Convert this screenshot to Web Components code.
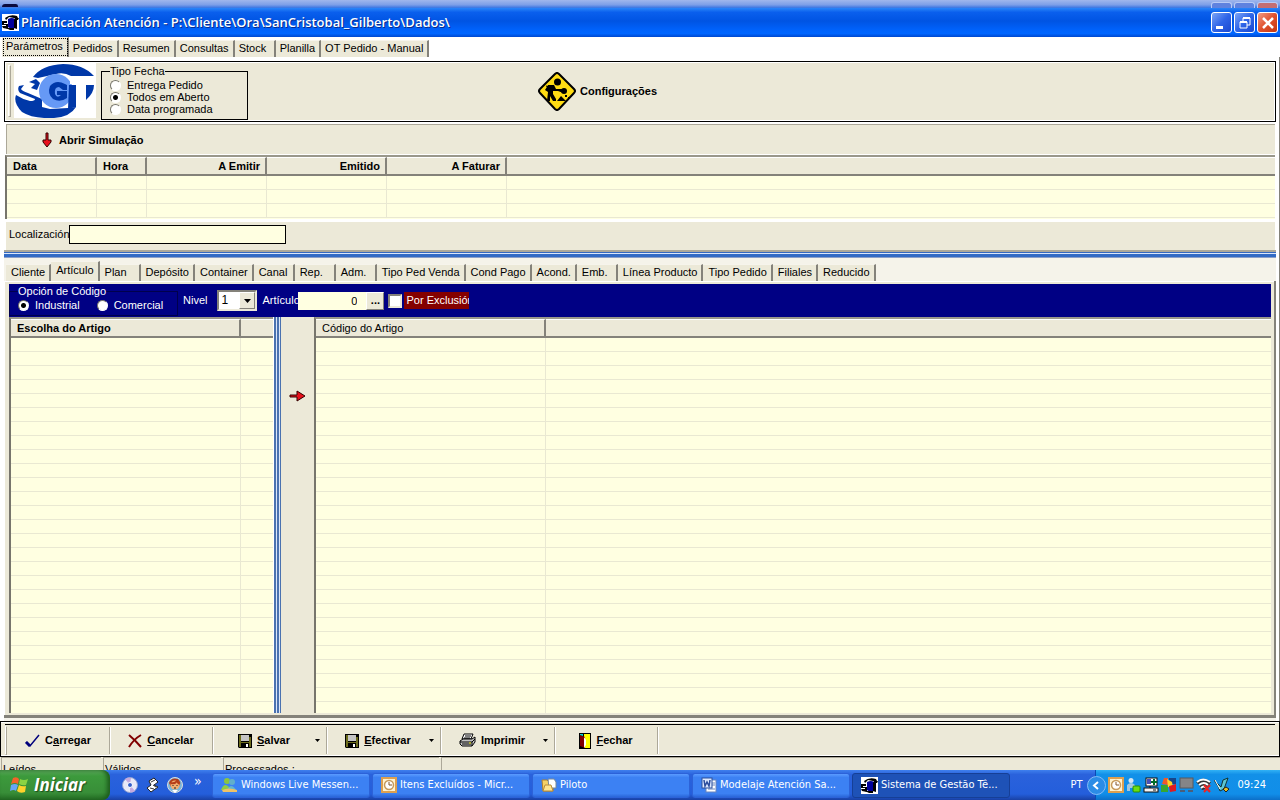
<!DOCTYPE html>
<html lang="es">
<head>
<meta charset="utf-8">
<title>Planificación Atención</title>
<style>
  html, body { margin: 0; height: 100%; }
  body {
    font: 11px/13px "Liberation Sans", Arial, sans-serif;
    color: #000;
    background: #fff;
    overflow: hidden;
  }
</style>
</head>
<body>
<planning-desktop></planning-desktop>

<script>
const ICONS = {
  sgt: [17, 17, `
    <rect width="17" height="17" fill="#fff"/>
    <path d="M3 4Q8 0 15 2L16 4H12L7 3 4 6Z"/>
    <path d="M6 5Q10 3 13 5V14Q9 16 6 13Z" fill="#00009a"/>
    <path d="M0 7H5V9H2V10H6V15L1 14 0 12H4V11H0ZM13 4H17L16 6H15V15L12 14V6Z"/>
    <path d="M4 14L8 16H12V14H6Z"/>`],
  logo: [82, 55, `
    <rect width="82" height="55" fill="#fff"/>
    <path d="M19 14Q28 2 49 1Q69 1 80 13H57Q50 9 42 11L24 15Z" fill="#0038a8"/>
    <path d="M5 23L10 22 7 26Q8 28 14 30L28 36V44L36 46 54 45 62 44Q56 54 40 55Q19 56 8 49Q-1 40 2 32Q8 36 16 38Q21 38 21 36L6 30Q3 27 5 23Z" fill="#0038a8"/>
    <path d="M15 19L22 16 26 20 23 27 17 25 21 21Z" fill="#0038a8"/>
    <circle cx="42" cy="28" r="17" fill="#6699f5"/>
    <path d="M51 21Q42 16 36 23Q33 31 39 36Q46 40 53 35V28H43V32H47Q43 36 41 31Q40 24 45 24L49 27H53V22Z" fill="#0038a8"/>
    <path d="M55 22H62V44L54 46Z" fill="#0038a8"/>
    <path d="M56 14H82V21H56Z" fill="#fff"/>
    <path d="M72 22H80Q80 30 72 37Z" fill="#0038a8"/>`],
  works: [38, 39, `
    <path d="M17 2Q19 0 21 2L36 17Q38 19 36 21L21 37Q19 39 17 37L2 21Q0 19 2 17Z" fill="#ffdc13" stroke="#000" stroke-width="2"/>
    <circle cx="19.500" cy="10" r="3.500"/>
    <circle cx="26" cy="19" r="3"/>
    <path d="M10 13L16 13 18 17H24V19H15V22L18 27V29H15L12 24 12 29H9L10 20 7 18Z"/>
    <path d="M8 14L24 20" stroke="#000"/>
    <path d="M19 29L23 24 28 29ZM27 23H29V25H27ZM30 25H31V27H30Z"/>`],
  down: [10, 17, `<path d="M4 1H6V8H9V10L5 15 1 10V8H4Z" fill="#e8101c" stroke="#300"/>`],
  right: [17, 12, `<path d="M1 5H8V1L16 6 8 11V7H1Z" fill="#e8101c" stroke="#300"/>`],
  check: [15, 14, `<path d="M1 8L5 12 14 1" fill="none" stroke="#00007c" stroke-width="1.500"/><path d="M1 8L5 12" stroke="#00007c" stroke-width="3"/>`],
  cross: [14, 14, `<path d="M1 1Q7 6 13 13M13 1Q6 5 1 13" fill="none" stroke="#800000" stroke-width="2"/>`],
  disk: [14, 14, `
    <path d="M0 0H14V14H1L0 13Z" fill="#000"/>
    <path d="M1 1H3V8H11V3H13V13H11V9H3V13H1Z" fill="#6c6c1c"/>
    <path d="M3 1H11V7H3Z" fill="#c4c4c4"/><path d="M8 10H10V13H8Z" fill="#fff"/>`],
  printer: [17, 15, `
    <path d="M5 1H14L12 6H3Z" fill="#fff" stroke="#000"/>
    <path d="M1 8L4 6H13L16 4V9L13 13H3L1 11Z" fill="#c4c4c4" stroke="#000"/>
    <path d="M6 3H12M5 5H11M1 9H13L16 6M3 11H12M13 9V13" stroke="#000" fill="none"/>
    <path d="M10 10H12" stroke="#ee0"/>`],
  door: [12, 16, `
    <rect width="12" height="16"/><rect x="5" y="1" width="6" height="14" fill="#ff0"/>
    <path d="M1 2L6 4V15L1 13Z" fill="#800000"/><path d="M1 1H4V3L1 2Z" fill="#09d5d5"/>
    <path d="M5 4L7 7V12L5 15" fill="#fff"/>`],
  caret: [7, 4, `<path d="M0 0H7L3.500 4Z"/>`],
  drop: [5, 3, `<path d="M0 0H5L2.500 3Z"/>`],
  winflag: [19, 18, `
    <path d="M3 2Q7 0 9 3L8 8Q5 6 1 8Z" fill="#f3632a"/>
    <path d="M10 3Q14 5 18 3L16 9Q13 10 9 8Z" fill="#8bd343"/>
    <path d="M1 9Q5 7 8 9L6 15Q4 13 0 15Z" fill="#66a5f7"/>
    <path d="M9 9Q12 11 16 10L15 16Q10 18 7 15Z" fill="#ffd22b"/>`],
  cd: [16, 16, `
    <circle cx="8" cy="8" r="7.500" fill="#e9e9f7" stroke="#8fa0d2"/>
    <path d="M8 8L3 2Q6 0 9 1ZM8 8L13 14Q11 16 8 15Z" fill="#c4a9df"/>
    <circle cx="8" cy="8" r="2.500" fill="#355fca" stroke="#fff"/>`],
  desk: [15, 16, `
    <path d="M4 4L9 1 13 5 9 8 13 10 6 15 2 11 6 8Z" fill="#fff" stroke="#222"/>
    <path d="M6 5L10 3M5 11L9 12M8 8L11 10" stroke="#333"/>`],
  face: [16, 16, `
    <circle cx="8" cy="8" r="7.500" fill="#79b5db" stroke="#ddd"/>
    <path d="M2 6Q4 0 11 2Q15 6 12 9L4 10Z" fill="#b53c18"/>
    <circle cx="8" cy="8" r="4.500" fill="#f3ad70"/><path d="M4 6Q8 7 10 4L12 7" stroke="#b53c18" stroke-width="2" fill="none"/>
    <path d="M6 8V9M10 8V9M7 11H9" stroke="#222"/><path d="M5 13H11L8 16Z" fill="#fff"/>`],
  people: [17, 16, `
    <circle cx="6" cy="4" r="3" fill="#8ac540"/><circle cx="11" cy="5" r="3" fill="#61aecb"/>
    <path d="M0 13Q3 5 8 10L9 13Z" fill="#8fcc46"/><path d="M6 13Q10 5 15 13Z" fill="#64b5cf"/>
    <path d="M1 13Q8 10 16 13V15H2Z" fill="#efc267"/>`],
  clock: [16, 16, `
    <rect x="1" y="1" width="14" height="14" fill="#fff2ce" stroke="#dda050" stroke-width="2"/>
    <circle cx="8" cy="8" r="4.500" fill="#fff" stroke="#c79a5c" stroke-width="1.500"/><path d="M8 5V8H11" fill="none" stroke="#84572b"/>`],
  folder: [16, 14, `
    <path d="M1 2H6L8 4H12V13H2Z" fill="#f5d166" stroke="#b2812c"/>
    <path d="M7 1H13L15 4V10H8Z" fill="#fff" stroke="#789"/>
    <path d="M4 7H10L12 13H2Z" fill="#ffe590" stroke="#b98d3b"/>`],
  word: [16, 16, `
    <rect x="5" y="3" width="10" height="12" fill="#fff" stroke="#6885bd"/>
    <path d="M11 6H14M11 8H14M7 12H14" stroke="#6885bd"/>
    <rect x="1" y="1" width="10" height="10" fill="#dce8ff" stroke="#2c519b"/>
    <path d="M3 3L4 9 6 5 8 9 9 3" fill="none" stroke="#2b4c9c" stroke-width="1.500"/>`],
  back: [19, 19, `
    <circle cx="9.500" cy="9.500" r="9" fill="#2b8ce6" stroke="#83bdf7"/>
    <path d="M11 6L7 9.500 11 13" fill="none" stroke="#fff" stroke-width="2"/>`],
  msn: [15, 16, `
    <circle cx="5" cy="3.500" r="2.500" fill="#d6e5f1"/><path d="M1 14V8Q5 4 9 8V14H7V11H4V14Z" fill="#a5c8dc"/>
    <rect x="7" y="9" width="7" height="6" rx="1" fill="#6bdd12" stroke="#279000"/>`],
  network: [16, 16, `
    <rect x="3" y="1" width="11" height="8" fill="#fff" stroke="#111"/><rect x="4" y="2" width="4" height="5" fill="#4a51b5"/>
    <path d="M11 2V8M8 5H14" stroke="#006d28" stroke-width="2"/>
    <rect x="1" y="11" width="14" height="4" fill="#f3f3f3" stroke="#111"/><path d="M7 9V11M10 13H13" stroke="#111"/>`],
  blocks: [16, 16, `
    <path d="M1 7L3 1H7V8Z" fill="#ef5a29"/><path d="M8 1H15V7H8Z" fill="#16468b"/>
    <path d="M0 8H7V15H0Z" fill="#36a631"/><path d="M6 2L11 5 12 10H7Z" fill="#ffd327"/><path d="M8 9L15 7V14L9 15Z" fill="#dc1b21"/>`],
  pcs: [15, 16, `
    <rect x="1" y="1" width="13" height="10" fill="#858587" stroke="#58595c"/>
    <path d="M1 14H6M9 14H14" stroke="#4a5e7b" stroke-width="2"/>`],
  wifi: [16, 16, `
    <path d="M0 5Q7-2 15 5L13 8 10 12 6 13 3 8Z" fill="#333"/>
    <path d="M1 5Q7 0 14 5M3 8Q8 4 12 8M5 11Q8 8 10 11" fill="none" stroke="#fff" stroke-width="2"/>
    <path d="M8 8L14 15M14 8L8 15" stroke="#e22" stroke-width="2"/>`],
  wave: [16, 16, `
    <path d="M0 3L4 9 6 14 10 12 14 1 9 3 7 10 3 6Z" fill="#5cc6d0" stroke="#133"/>
    <path d="M1 3L6 12" stroke="#fff"/><path d="M9 12L12 10 15 12 12 15Z" fill="#e6bd20" stroke="#222"/>`],
  minimize: [21, 21, `<path d="M4 14.500H11" stroke="#fff" stroke-width="3"/>`],
  restore: [21, 21, `<path d="M8 8V5H15V12H12M5 9H12V15H5Z" fill="none" stroke="#fff"/><path d="M8 5H15M5 9H12" stroke="#fff" stroke-width="2"/>`],
  close: [21, 21, `<path d="M5 5L15 15M15 5L5 15" stroke="#fff" stroke-width="2.500"/>`],
};

class AppIcon extends HTMLElement {
  constructor() {
    super();
    this.attachShadow({ mode: "open" });
  }

  connectedCallback() {
    const [w, h, body] = ICONS[this.getAttribute("name")];
    this.shadowRoot.innerHTML = `
      <style>
        :host { display: inline-block; flex: none; }
        svg { display: block; }
      </style>
      <svg width="${w}" height="${h}" viewBox="0 0 ${w} ${h}" aria-hidden="true">${body}</svg>
    `;
  }
}

class TitleBar extends HTMLElement {
  constructor() {
    super();
    this.attachShadow({ mode: "open" });
    this.shadowRoot.innerHTML = `
      <style>
        :host { display: block; }
        .behind {
          height: 8px;
          display: flex;
          justify-content: flex-end;
          gap: 2px;
          padding-right: 2px;
          box-sizing: border-box;
          background: linear-gradient(#a0b7ec, #7d9fe8 60%, #3773e2);
        }
        .behind i {
          width: 19px;
          height: 5px;
          margin-top: 2px;
          border: 1px solid #b9cbf5;
          border-bottom: 0;
          border-radius: 3px 3px 0 0;
          background: #5f82df;
        }
        .behind i:last-child { background: #c46e73; }
        .behind b {
          width: 16px;
          height: 3px;
          margin: 4px auto 0 2px;
          border-radius: 8px 6px 0 0;
          background: #0b0b3c;
        }
        header {
          display: flex;
          align-items: center;
          height: 29px;
          padding: 0 2px;
          background: linear-gradient(#2a85f8, #0a5fed 15%, #0054e3 45%, #0062fb 75%, #0066ff 88%, #0048cf);
        }
        h1 {
          flex: 1;
          margin: 0 0 0 2px;
          font: 600 13px/17px "Open Sans", sans-serif;
          color: #fff;
          text-shadow: 1px 1px #0a2c8c;
        }
        .buttons { display: flex; gap: 2px; }
        button {
          width: 21px;
          height: 21px;
          padding: 0;
          border: 1px solid #fff;
          border-radius: 3px;
          display: grid;
          place-items: center;
          background: linear-gradient(135deg, #7ba4f6, #2f65e8 50%, #1b48d0);
        }
        button.close { background: linear-gradient(135deg, #f09c85, #e0512e 50%, #c33712); }
      </style>
      <div class="behind"><b></b><i></i><i></i><i></i></div>
      <header>
        <app-icon name="sgt"></app-icon>
        <h1><slot></slot></h1>
        <div class="buttons">
          <button aria-label="Minimizar"><app-icon name="minimize"></app-icon></button>
          <button aria-label="Restaurar"><app-icon name="restore"></app-icon></button>
          <button class="close" aria-label="Fechar"><app-icon name="close"></app-icon></button>
        </div>
      </header>
    `;
  }
}

class TabStrip extends HTMLElement {
  constructor() {
    super();
    this.attachShadow({ mode: "open" });
  }

  connectedCallback() {
    this.selected = Number(this.getAttribute("selected") || 0);
    this.render();
  }

  render() {
    const tabs = this.getAttribute("tabs").split("|");
    this.shadowRoot.innerHTML = `
      <style>
        :host {
          display: flex;
          flex: none;
          align-items: flex-end;
          height: 20px;
          padding-left: 2px;
        }
        button {
          height: 17px;
          min-width: 41px;
          padding: 0 4px 2px var(--tab-start, 5px);
          border: 0;
          border-top: 1px solid #f6f4ec;
          border-right: 2px solid #84827a;
          background: #ece9d8;
          color: #000;
          font: inherit;
          text-align: left;
          white-space: nowrap;
        }
        button[aria-selected="true"] { height: 20px; }
        :host([focused]) button[aria-selected="true"] {
          outline: 1px dotted #000;
          outline-offset: -2px;
        }
      </style>
      ${tabs
        .map((t, i) => `<button role="tab" aria-selected="${i === this.selected}">${t}</button>`)
        .join("")}
    `;
    this.setAttribute("role", "tablist");
    this.shadowRoot.querySelectorAll("button").forEach((btn, i) => {
      btn.onclick = () => {
        this.selected = i;
        this.render();
      };
    });
  }
}

class RadioOption extends HTMLElement {
  constructor() {
    super();
    this.attachShadow({ mode: "open" });
  }

  connectedCallback() {
    this.shadowRoot.innerHTML = `
      <style>
        :host { display: block; }
        label { display: flex; align-items: center; gap: 6px; height: 12px; white-space: nowrap; }
        input {
          appearance: none;
          width: 11px;
          height: 11px;
          margin: 0;
          border: 1px solid;
          border-color: #77756c #fff #fff #77756c;
          border-radius: 50%;
          background: #fff;
        }
        input:checked { background: radial-gradient(circle, #000 2px, #fff 3px); }
      </style>
      <label><input type="radio" ${this.hasAttribute("checked") ? "checked" : ""}><slot></slot></label>
    `;
  }
}

class DataGrid extends HTMLElement {
  constructor() {
    super();
    this.attachShadow({ mode: "open" });
  }

  // columns: "Title:width[:right]" joined with "|"; the last one takes the rest
  connectedCallback() {
    const columns = this.getAttribute("columns").split("|").map((c) => c.split(":"));
    const rows = Number(this.getAttribute("rows"));
    const row = `<tr>${columns.map(() => "<td></td>").join("")}</tr>`;
    this.shadowRoot.innerHTML = `
      <style>
        :host {
          display: block;
          overflow: hidden;
          border-top: 2px solid #9a988b;
          border-left: 2px solid #77756c;
          padding-bottom: 1px;
          background: #ffffe1;
        }
        table { width: 100%; table-layout: fixed; border-collapse: separate; border-spacing: 0; }
        th, td { box-sizing: border-box; padding: 0; }
        th {
          height: 19px;
          padding: 0 5px 0 6px;
          border-top: 1px solid #fff;
          border-right: 2px solid #84827a;
          border-bottom: 2px solid #84827a;
          background: #ece9d8;
          text-align: left;
          white-space: nowrap;
          font-weight: var(--head-weight, bold);
          line-height: 13px;
        }
        th.right { text-align: right; }
        th:last-child { border-right: 0; }
        td { height: 14px; border-right: 1px solid #e9e8d2; border-bottom: 1px solid #e9e8d2; }
        td:last-child { border-right: 0; }
      </style>
      <table>
        <thead>
          <tr>${columns
            .map(([title, width, align]) =>
              `<th class="${align || ""}" ${width ? `style="width: ${width}px"` : ""}>${title}</th>`)
            .join("")}</tr>
        </thead>
        <tbody>${row.repeat(rows)}</tbody>
      </table>
    `;
  }
}

class ToolButton extends HTMLElement {
  constructor() {
    super();
    this.attachShadow({ mode: "open" });
  }

  connectedCallback() {
    this.shadowRoot.innerHTML = `
      <style>
        :host {
          display: flex;
          border-right: 1px solid #aca899;
          box-shadow: 1px 0 #fff;
        }
        button {
          display: flex;
          align-items: center;
          justify-content: center;
          gap: 5px;
          width: 102px;
          padding: 0;
          border: 0;
          background: none;
          font: inherit;
          font-weight: bold;
          color: #000;
        }
        :host([menu]) button { width: 96px; padding-left: 6px; }
        :host([menu]) button.menu { width: 17px; padding: 0; }
      </style>
      <button><app-icon name="${this.getAttribute("icon")}"></app-icon><span><slot></slot></span></button>
      ${this.hasAttribute("menu") ? `<button class="menu" aria-label="Opções"><app-icon name="drop"></app-icon></button>` : ""}
    `;
  }
}

class ArticleFilter extends HTMLElement {
  constructor() {
    super();
    this.attachShadow({ mode: "open" });
    this.shadowRoot.innerHTML = `
      <style>
        :host {
          display: flex;
          flex: none;
          align-items: center;
          height: 33px;
          background: #000084;
          color: #fff;
        }
        fieldset {
          width: 169px;
          height: 31px;
          box-sizing: border-box;
          margin: 0;
          padding: 0 0 0 8px;
          border: 1px solid #00004c;
          min-width: 0;
        }
        legend { padding: 0; height: 13px; }
        .options { display: flex; gap: 17px; padding-top: 1px; }
        .nivel { margin: 0 10px 0 5px; }
        .combo {
          display: grid;
          align-items: center;
          width: 36px;
          height: 17px;
          border: 2px solid;
          border-color: #84827a #ece9d8 #ece9d8 #84827a;
          background: #fff;
        }
        .combo > * { grid-area: 1 / 1; }
        select {
          appearance: none;
          width: 36px;
          height: 17px;
          padding: 0 2px;
          border: 0;
          background: none;
          font: inherit;
          font-size: 12px;
        }
        .arrow {
          justify-self: end;
          display: grid;
          place-items: center;
          width: 14px;
          height: 15px;
          border: 1px solid;
          border-color: #fff #84827a #84827a #fff;
          background: #ece9d8;
          pointer-events: none;
        }
        .articulo { width: 36px; margin-left: 5px; overflow: hidden; }
        input[type="text"] {
          width: 68px;
          height: 18px;
          box-sizing: border-box;
          padding: 0 9px;
          border: 0;
          background: #ffffe1;
          font: inherit;
          text-align: right;
        }
        button {
          width: 18px;
          height: 18px;
          padding: 0;
          border: 1px solid;
          border-color: #fff #84827a #84827a #fff;
          background: #ece9d8;
          font: bold 11px/13px "Liberation Sans", Arial, sans-serif;
        }
        .exclude { display: flex; align-items: center; gap: 2px; margin-left: 4px; }
        input[type="checkbox"] {
          appearance: none;
          width: 14px;
          height: 14px;
          margin: 0;
          border: 2px solid;
          border-color: #84827a #ece9d8 #ece9d8 #84827a;
          background: #fff;
        }
        .exclude span { width: 63px; padding: 2px 0 2px 2px; overflow: hidden; white-space: nowrap; background: #840000; }
      </style>
      <fieldset>
        <legend>Opción de Código</legend>
        <div class="options">
          <radio-option checked>Industrial</radio-option>
          <radio-option>Comercial</radio-option>
        </div>
      </fieldset>
      <label class="nivel" for="nivel">Nivel</label>
      <div class="combo">
        <select id="nivel"><option>1</option><option>2</option><option>3</option></select>
        <span class="arrow"><app-icon name="caret"></app-icon></span>
      </div>
      <label class="articulo" for="articulo">Artículo</label>
      <input type="text" id="articulo" value="0">
      <button aria-label="Buscar">...</button>
      <label class="exclude"><input type="checkbox"><span>Por Exclusión</span></label>
    `;
  }
}

class TaskButton extends HTMLElement {
  constructor() {
    super();
    this.attachShadow({ mode: "open" });
  }

  connectedCallback() {
    this.shadowRoot.innerHTML = `
      <style>
        :host { display: block; flex: 0 1 158px; min-width: 0; }
        button {
          display: flex;
          align-items: center;
          gap: 3px;
          width: 100%;
          height: 25px;
          padding: 0 8px;
          border: 1px solid #2c62d8;
          border-radius: 3px;
          background: linear-gradient(#5b9bff, #3c81f3 15%, #3c81f3 85%, #2a66d8);
          color: #fff;
          font: inherit;
          white-space: nowrap;
        }
        :host([active]) button { background: #1e52b7; border-color: #163f96; }
      </style>
      <button><app-icon name="${this.getAttribute("icon")}"></app-icon><span><slot></slot></span></button>
    `;
  }
}

class TaskBar extends HTMLElement {
  constructor() {
    super();
    this.attachShadow({ mode: "open" });
    this.shadowRoot.innerHTML = `
      <style>
        :host {
          display: flex;
          align-items: center;
          height: 30px;
          background: linear-gradient(#3f80ee, #2a62dc 15%, #245edb 80%, #1941a5);
          color: #fff;
          font: 11px/14px "DejaVu Sans Condensed", "DejaVu Sans", sans-serif;
        }
        .start {
          display: flex;
          align-items: center;
          gap: 5px;
          width: 110px;
          height: 30px;
          padding: 0 0 0 10px;
          border: 0;
          border-radius: 0 8px 8px 0;
          background: linear-gradient(#5faa5f, #3c9a3c 20%, #388e38 75%, #256d25);
          box-shadow: inset -3px 0 4px #1d5c1d;
          color: #fff;
          font: italic bold 17px/24px "Open Sans", sans-serif;
          text-shadow: 1px 1px 1px #1c4d1c;
        }
        .quick { display: flex; align-items: center; gap: 7px; width: 90px; padding-left: 12px; }
        .more { align-self: flex-start; line-height: 8px; font-size: 14px; margin-left: 4px; }
        .tasks { display: flex; flex: 1; gap: 2px; min-width: 0; }
        .lang { padding-right: 13px; }
        .tray {
          display: flex;
          align-items: center;
          gap: 2px;
          height: 30px;
          padding-right: 14px;
          border-left: 1px solid #0a4bb4;
          background: linear-gradient(#31b1f5, #1290e8 15%, #118ee9 80%, #0c6fc8);
        }
        .tray app-icon:first-child { margin-left: -9px; }
        time { margin-left: 5px; }
      </style>
      <button class="start"><app-icon name="winflag"></app-icon>Iniciar</button>
      <div class="quick">
        <app-icon name="cd"></app-icon>
        <app-icon name="desk"></app-icon>
        <app-icon name="face"></app-icon>
        <span class="more">»</span>
      </div>
      <div class="tasks"><slot></slot></div>
      <span class="lang">PT</span>
      <div class="tray">
        <app-icon name="back"></app-icon>
        <app-icon name="clock"></app-icon>
        <app-icon name="msn"></app-icon>
        <app-icon name="network"></app-icon>
        <app-icon name="blocks"></app-icon>
        <app-icon name="pcs"></app-icon>
        <app-icon name="wifi"></app-icon>
        <app-icon name="wave"></app-icon>
        <time>09:24</time>
      </div>
    `;
  }
}

class PlanningDesktop extends HTMLElement {
  constructor() {
    super();
    this.attachShadow({ mode: "open" });
    this.shadowRoot.innerHTML = `
      <style>
        :host { display: flex; flex-direction: column; height: 100vh; }
        main {
          flex: 1;
          min-height: 0;
          display: flex;
          flex-direction: column;
          padding: 4px 3px 0 4px;
          border-right: 1px solid #84827a;
        }
        .pages { --tab-start: 4px; }
        .grip { width: 1px; border: 1px solid; border-color: #fff #aca899 #aca899 #fff; }
        .options {
          display: grid;
          grid-template-columns: auto 1fr;
          height: 57px;
          padding: 1px;
          border: 1px solid #000;
          background: #ece9d8;
          box-shadow: inset 1px 1px #fff, inset -1px -1px #fff;
        }
        .options .left { display: flex; padding-left: 2px; }
        .options .grip { margin: 2px 3px 3px 0; }
        .options fieldset {
          width: 147px;
          height: 55px;
          box-sizing: border-box;
          margin: 2px 0 0 5px;
          padding: 1px 0 0 8px;
          border: 1px solid #000;
        }
        .options legend { height: 13px; padding: 0; }
        .options .config {
          justify-self: start;
          margin-left: calc(50% - 223px);
          display: flex;
          align-items: center;
          gap: 4px;
          padding: 0;
          border: 0;
          background: none;
          font: inherit;
          font-weight: bold;
        }
        .simulation {
          display: flex;
          height: 29px;
          margin: 2px 1px 1px 2px;
          border-top: 1px solid #aca899;
          border-left: 1px solid #aca899;
          background: #ece9d8;
        }
        .simulation button {
          display: flex;
          align-items: center;
          gap: 7px;
          padding: 2px 35px 0;
          border: 0;
          background: none;
          font: inherit;
          font-weight: bold;
        }
        .simulation + data-grid { margin: 0 1px 3px 1px; }
        .search {
          display: flex;
          align-items: center;
          height: 24px;
          margin: 0 1px 0 2px;
          padding: 0 0 4px 3px;
          background: #ece9d8;
        }
        .search label { width: 60px; }
        .search input {
          width: 217px;
          height: 19px;
          box-sizing: border-box;
          border: 1px solid #000;
          background: #ffffe1;
          font: inherit;
        }
        .splitter {
          height: 8px;
          flex: none;
          background: linear-gradient(#aca899 2px, #3468c0 2px 3px, #dbe6f8 3px 4px, #316ac5 4px 7px, #8ca0c8 7px);
        }
        .articles {
          flex: 1;
          min-height: 0;
          display: flex;
          flex-direction: column;
          padding-top: 3px;
          background: #f5f3ea;
        }
        .sheet {
          flex: 1;
          min-height: 0;
          display: flex;
          flex-direction: column;
          margin-bottom: 3px;
          padding: 3px 3px 2px 5px;
          border-right: 2px solid #84827a;
          border-bottom: 3px solid #84827a;
          background: #ece9d8;
          box-shadow: inset 1px 1px #fff;
        }
        .lists {
          flex: 1;
          min-height: 0;
          display: grid;
          grid-template-columns: 264px 8px 33px 1fr;
          grid-template-rows: minmax(0, 1fr);
        }
        .lists .bar { background: linear-gradient(90deg, #fff 1px, #4a72b0 1px 3px, #dbe6f8 3px 4px, #4a72b0 4px 6px, #dbe6f8 6px 7px, #4a72b0 7px); }
        .lists .move {
          display: flex;
          align-items: flex-start;
          justify-content: center;
          padding: 73px 0 0;
          border: 0;
          background: #ece9d8;
        }
        .light { --head-weight: normal; }
        .actions {
          display: flex;
          height: 34px;
          border: 1px solid #000;
          padding-left: 4px;
          background: #ece9d8;
          box-shadow: inset 0 1px #fff, inset 0 -1px #fff;
        }
        .actions > div {
          display: flex;
          flex: 1;
          margin: 2px 4px 0 0;
          border-top: 1px solid #000;
        }
        .actions .grip { width: 0; margin: 1px 0; }
        .actions tool-button { margin: 2px 0; }
        footer {
          display: grid;
          grid-template-columns: 100px 118px 216px 1fr;
          gap: 2px;
          height: 13px;
          padding-left: 1px;
          overflow: hidden;
          background: #ece9d8;
        }
        footer span { border-top: 1px solid #aca899; border-left: 1px solid #aca899; padding: 5px 1px 0; }
      </style>
      <title-bar>Planificación Atención - P:\\Cliente\\Ora\\SanCristobal_Gilberto\\Dados\\</title-bar>
      <tab-strip class="pages" focused tabs="Parámetros|Pedidos|Resumen|Consultas|Stock|Planilla|OT Pedido - Manual"></tab-strip>
      <main>
        <section class="options">
          <div class="left">
            <div class="grip"></div>
            <app-icon name="logo"></app-icon>
            <fieldset>
              <legend>Tipo Fecha</legend>
              <radio-option>Entrega Pedido</radio-option>
              <radio-option checked>Todos em Aberto</radio-option>
              <radio-option>Data programada</radio-option>
            </fieldset>
          </div>
          <button class="config"><app-icon name="works"></app-icon>Configurações</button>
        </section>
        <div class="simulation">
          <button><app-icon name="down"></app-icon>Abrir Simulação</button>
        </div>
        <data-grid rows="3" columns="Data:90|Hora:50|A Emitir:120:right|Emitido:120:right|A Faturar:120:right|"></data-grid>
        <div class="search">
          <label for="loc">Localización</label><input type="text" id="loc">
        </div>
        <div class="splitter"></div>
        <section class="articles">
          <tab-strip selected="1" tabs="Cliente|Artículo|Plan|Depósito|Container|Canal|Rep.|Adm.|Tipo Ped Venda|Cond Pago|Acond.|Emb.|Línea Producto|Tipo Pedido|Filiales|Reducido"></tab-strip>
          <div class="sheet">
            <article-filter></article-filter>
            <div class="lists">
              <data-grid rows="80" columns="Escolha do Artigo:230|"></data-grid>
              <div class="bar"></div>
              <button class="move" aria-label="Adicionar"><app-icon name="right"></app-icon></button>
              <data-grid class="light" rows="80" columns="Código do Artigo:230|"></data-grid>
            </div>
          </div>
        </section>
      </main>
      <div class="actions">
        <div>
          <div class="grip"></div>
          <tool-button icon="check">C<u>a</u>rregar</tool-button>
          <tool-button icon="cross"><u>C</u>ancelar</tool-button>
          <tool-button icon="disk" menu><u>S</u>alvar</tool-button>
          <tool-button icon="disk" menu><u>E</u>fectivar</tool-button>
          <tool-button icon="printer" menu>Imprimir</tool-button>
          <tool-button icon="door"><u>F</u>echar</tool-button>
        </div>
      </div>
      <footer><span>Leídos</span><span>Válidos</span><span>Processados :</span><span></span></footer>
      <task-bar>
        <task-button icon="people">Windows Live Messen...</task-button>
        <task-button icon="clock">Itens Excluídos - Micr...</task-button>
        <task-button icon="folder">Piloto</task-button>
        <task-button icon="word">Modelaje Atención Sa...</task-button>
        <task-button icon="sgt" active>Sistema de Gestão Tê...</task-button>
      </task-bar>
    `;
  }
}

customElements.define("app-icon", AppIcon);
customElements.define("title-bar", TitleBar);
customElements.define("tab-strip", TabStrip);
customElements.define("radio-option", RadioOption);
customElements.define("data-grid", DataGrid);
customElements.define("tool-button", ToolButton);
customElements.define("article-filter", ArticleFilter);
customElements.define("task-button", TaskButton);
customElements.define("task-bar", TaskBar);
customElements.define("planning-desktop", PlanningDesktop);
</script>
</body>
</html>
